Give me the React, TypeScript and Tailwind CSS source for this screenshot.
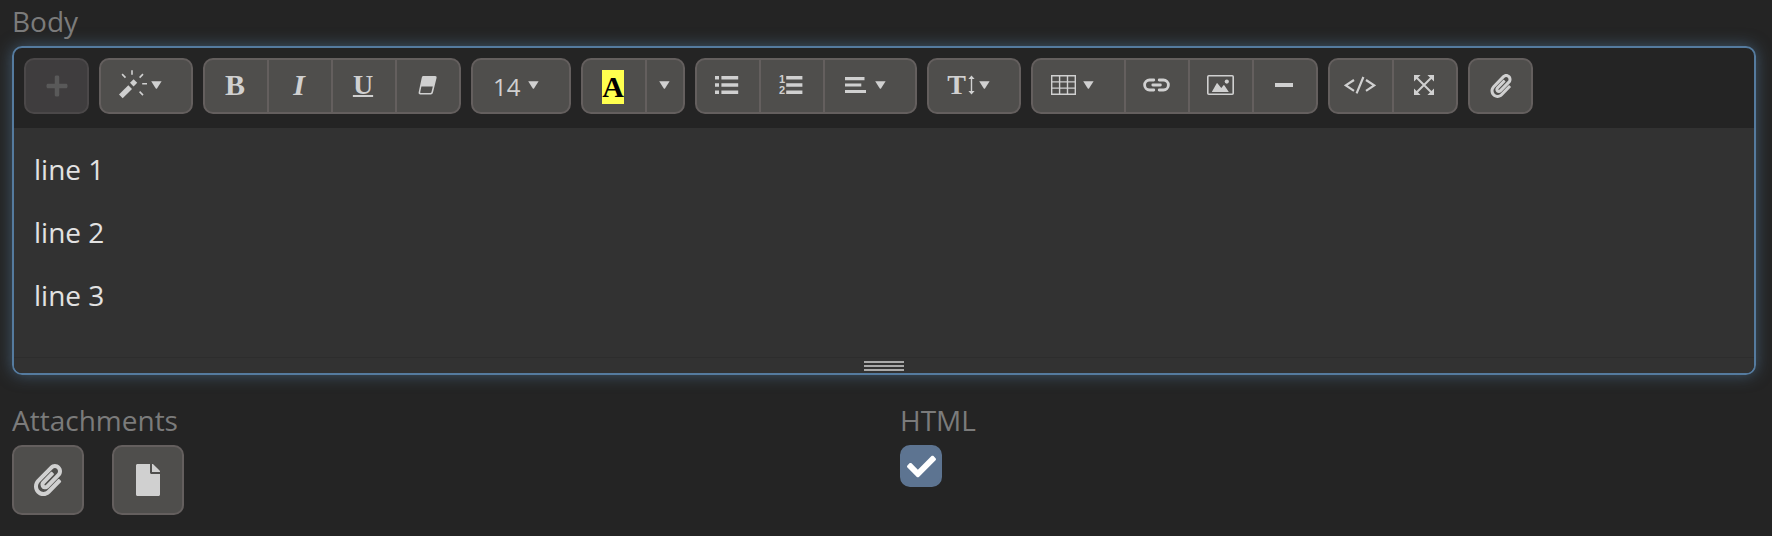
import { JSX, ReactNode } from 'react';
import cn from 'clsx';
import { FaCheck, FaFile, FaPaperclip, FaPlus } from 'react-icons/fa';

interface ToolButtonProps {
  label: string;
  children: ReactNode;
  className?: string;
  disabled?: boolean;
}

function ToolButton(props: Readonly<ToolButtonProps>): JSX.Element {
  const { label, children, className = 'w-[66px] justify-center pr-0.5 pb-0.5', disabled } = props;

  return (
    <button
      type="button"
      aria-label={label}
      disabled={disabled}
      className={cn(
        '-ml-0.5 flex h-14 shrink-0 items-center border-2 first:ml-0 first:rounded-l-[10px] last:rounded-r-[10px]',
        disabled ? 'border-[#4b4849] bg-[#3f3d3e] text-[#595959]' : 'border-[#645f5e] bg-[#4f4e4c] text-[#d0d0d0]',
        className,
      )}
    >
      {children}
    </button>
  );
}

function ToolGroup({ children }: Readonly<{ children: ReactNode }>): JSX.Element {
  return <div className="flex">{children}</div>;
}

function Caret(): JSX.Element {
  return (
    <svg width="11" height="8" viewBox="0 0 11 8" fill="currentColor" aria-hidden="true">
      <path d="M.2.2h10.4L6 7.5q-.6.7-1.2 0z" />
    </svg>
  );
}

function WandIcon(): JSX.Element {
  return (
    <svg width="28" height="30" viewBox="0 0 28 30" fill="currentColor" aria-hidden="true">
      <path d="M0 24.4 9.3 15.2 13 18.9 3.7 28.2z" />
      <path d="M11 12.8 14.6 9.2 18.2 12.8 14.6 16.4z" />
      <path d="M13 .3v4.5M3.1 4.1l3.4 3.5M24 4.1l-3.4 3.5M23.2 13.7H28M20.6 21.6l3.4 3.5" stroke="currentColor" strokeWidth="1.6" fill="none" />
    </svg>
  );
}

function EraserIcon(): JSX.Element {
  return (
    <svg width="19" height="20" viewBox="0 0 19 20" fill="currentColor" aria-hidden="true">
      <path
        fillRule="evenodd"
        d="M5.5 1H17.2Q19 1 18.6 2.8L15 17.4Q14.6 19.4 12.8 19.4H2Q.2 19.4.6 17.6L3.8 2.4Q4.1 1 5.5 1zM3.4 11.5 2.2 17.2Q2 18 2.8 18H12.2Q13.2 18 13.4 17.2L14.8 11.5z"
      />
    </svg>
  );
}

function BulletListIcon(): JSX.Element {
  return (
    <svg width="24" height="20" viewBox="0 0 24 20" fill="currentColor" aria-hidden="true">
      <path d="M0 1h4v3.6H0zM0 8.2h4v3.6H0zM0 15.4h4V19H0zM6.4 1h16.8v3.6H6.4zM6.4 8.2h16.8v3.6H6.4zM6.4 15.4h16.8V19H6.4z" />
    </svg>
  );
}

function NumberedListIcon(): JSX.Element {
  return (
    <svg width="24" height="24" viewBox="0 -2 24 24" fill="currentColor" className="overflow-visible" aria-hidden="true">
      <path d="M7.2 1h16.2v3.6H7.2zM7.2 8.2h16.2v3.6H7.2zM7.2 15.4h16.2V19H7.2z" />
      <text x="0" y="8.4" fontSize="11" fontWeight="700" fontFamily="Liberation Sans, sans-serif">1</text>
      <text x="0" y="19.2" fontSize="11" fontWeight="700" fontFamily="Liberation Sans, sans-serif">2</text>
    </svg>
  );
}

function AlignIcon(): JSX.Element {
  return (
    <svg width="28" height="30" viewBox="0 0 28 30" fill="currentColor" aria-hidden="true">
      <path d="M2 7h19.5v3.2H2zM2 13.5h16.3v3H2zM2 19.9h21v3.2H2z" />
    </svg>
  );
}

function HeightArrowIcon(): JSX.Element {
  return (
    <svg width="7" height="20" viewBox="0 0 7 20" fill="currentColor" aria-hidden="true">
      <path d="M3.5.6 6.6 4H4.2v12h2.4L3.5 19.4.4 16h2.4V4H.4z" />
    </svg>
  );
}

function TableIcon(): JSX.Element {
  return (
    <svg width="28" height="20" viewBox="0 0 28 20" fill="none" stroke="currentColor" strokeWidth="1.4" aria-hidden="true">
      <path d="M.7.7h23.6v18.6H.7zM8.6.7v18.6M16.5.7v18.6M.7 6.9h23.6M.7 13.1h23.6" />
    </svg>
  );
}

function LinkIcon(): JSX.Element {
  return (
    <svg width="27" height="14" viewBox="0 0 27 14" fill="none" stroke="currentColor" strokeWidth="2.8" strokeLinecap="round" aria-hidden="true">
      <path d="M10.8 2H6.6a5 5 0 0 0 0 10h4.2M16.2 2h4.2a5 5 0 0 1 0 10h-4.2M9.8 7h7.6" />
    </svg>
  );
}

function PictureIcon(): JSX.Element {
  return (
    <svg width="27" height="20" viewBox="0 0 27 20" fill="currentColor" aria-hidden="true">
      <rect x=".8" y=".8" width="25.4" height="18.4" rx="1" fill="none" stroke="currentColor" strokeWidth="1.6" />
      <circle cx="19.8" cy="6.6" r="2.1" />
      <path d="M4.8 17 9.6 8.4Q10 7.8 10.6 8.4L14.3 13l2-2.6q.6-.7 1.2 0L21.8 17z" />
    </svg>
  );
}

function CodeIcon(): JSX.Element {
  return (
    <svg width="32" height="18" viewBox="0 0 32 18" fill="none" stroke="currentColor" strokeWidth="2.2" aria-hidden="true">
      <path d="M10 4 1.8 9.4 10 14.8M22 4l8.2 5.4L22 14.8M19.4 1 12.6 17.4" />
    </svg>
  );
}

function FullscreenIcon(): JSX.Element {
  return (
    <svg width="20" height="20" viewBox="0 0 20 20" fill="currentColor" aria-hidden="true">
      <path d="M0 0h6.6L0 6.6zM20 0v6.6L13.4 0zM0 20v-6.6L6.6 20zM20 20h-6.6l6.6-6.6z" />
      <path d="M2 2 18 18M18 2 2 18" stroke="currentColor" strokeWidth="2" />
    </svg>
  );
}

const dropdown = 'w-[94px] gap-1 pb-0.5 pl-[18px]';
const single = 'w-[65px] justify-center';
const letter = "font-['Liberation_Serif',serif] font-bold";

function Toolbar(): JSX.Element {
  return (
    <div role="toolbar" aria-label="Formatting" className="flex flex-wrap gap-2.5 px-2.5 pt-2.5 pb-3.5">
      <ToolGroup>
        <ToolButton label="Insert" className={single} disabled>
          <FaPlus size={24} />
        </ToolButton>
      </ToolGroup>
      <ToolGroup>
        <ToolButton label="Style" className={dropdown}>
          <WandIcon />
          <Caret />
        </ToolButton>
      </ToolGroup>
      <ToolGroup>
        <ToolButton label="Bold">
          <span className={cn(letter, 'text-[30px] leading-[34px]')}>B</span>
        </ToolButton>
        <ToolButton label="Italic">
          <span className={cn(letter, 'text-[30px] leading-[34px] italic')}>I</span>
        </ToolButton>
        <ToolButton label="Underline">
          <span className={cn(letter, 'text-[28px] leading-[34px] underline decoration-2 underline-offset-1')}>U</span>
        </ToolButton>
        <ToolButton label="Remove formatting">
          <EraserIcon />
        </ToolButton>
      </ToolGroup>
      <ToolGroup>
        <ToolButton label="Font size" className="w-[100px] gap-2 pb-0.5 pl-5">
          <span className="pt-1 text-2xl">14</span>
          <Caret />
        </ToolButton>
      </ToolGroup>
      <ToolGroup>
        <ToolButton label="Recent colour">
          <span className={cn(letter, 'mt-1 bg-[#ffff4f] text-[30px] leading-[34px] text-black')}>A</span>
        </ToolButton>
        <ToolButton label="More colours" className="w-10 justify-center pr-0.5 pb-0.5">
          <Caret />
        </ToolButton>
      </ToolGroup>
      <ToolGroup>
        <ToolButton label="Unordered list">
          <BulletListIcon />
        </ToolButton>
        <ToolButton label="Ordered list">
          <NumberedListIcon />
        </ToolButton>
        <ToolButton label="Paragraph" className={dropdown}>
          <AlignIcon />
          <Caret />
        </ToolButton>
      </ToolGroup>
      <ToolGroup>
        <ToolButton label="Line height" className={dropdown}>
          <span className="flex w-7 items-center justify-end gap-0.5">
            <span className={cn(letter, 'text-[28px] leading-[34px]')}>T</span>
            <HeightArrowIcon />
          </span>
          <Caret />
        </ToolButton>
      </ToolGroup>
      <ToolGroup>
        <ToolButton label="Table" className="w-[95px] gap-1 pb-0.5 pl-[18px]">
          <TableIcon />
          <Caret />
        </ToolButton>
        <ToolButton label="Link">
          <LinkIcon />
        </ToolButton>
        <ToolButton label="Picture">
          <PictureIcon />
        </ToolButton>
        <ToolButton label="Horizontal rule">
          <span className="h-1 w-[18px] bg-current" />
        </ToolButton>
      </ToolGroup>
      <ToolGroup>
        <ToolButton label="Code view">
          <CodeIcon />
        </ToolButton>
        <ToolButton label="Full screen">
          <FullscreenIcon />
        </ToolButton>
      </ToolGroup>
      <ToolGroup>
        <ToolButton label="Attach file" className={single}>
          <FaPaperclip size={24} />
        </ToolButton>
      </ToolGroup>
    </div>
  );
}

const lines = ['line 1', 'line 2', 'line 3'];

function Editor(): JSX.Element {
  return (
    <div className="overflow-hidden rounded-[10px] border-2 border-[#557b9f] shadow-[0_0_16px_rgba(85,123,159,0.6)]">
      <Toolbar />
      <div
        role="textbox"
        aria-multiline="true"
        aria-labelledby="body-label"
        contentEditable
        suppressContentEditableWarning
        className="bg-[#323232] p-5 text-[#e2e2e2] outline-none"
      >
        {lines.map((line) => (
          <p key={line} className="mb-[21px]">
            {line}
          </p>
        ))}
      </div>
      <div className="flex h-4 cursor-ns-resize flex-col items-center gap-0.5 border-t border-[#2d2d2d] bg-[#323232] pt-[3px]">
        <span className="h-0.5 w-10 bg-[#a9a9a9]" />
        <span className="h-0.5 w-10 bg-[#a9a9a9]" />
        <span className="h-0.5 w-10 bg-[#a9a9a9]" />
      </div>
    </div>
  );
}

function AttachButton({ label, children }: Readonly<{ label: string; children: ReactNode }>): JSX.Element {
  return (
    <button type="button" aria-label={label} className="flex h-[70px] w-[72px] items-center justify-center rounded-[10px] border-2 border-[#645f5e] bg-[#4f4e4c] text-[#d0d0d0]">
      {children}
    </button>
  );
}

function App(): JSX.Element {
  return (
    <main className="min-h-screen bg-[#242424] pr-4 pl-3 font-['Open_Sans',sans-serif] text-[28px] leading-[42px] text-[#7b7b7b]">
      <div id="body-label" className="mb-1">
        Body
      </div>
      <Editor />
      <div className="mt-6 grid grid-cols-2 gap-8">
        <div role="group" aria-labelledby="attachments-label">
          <div id="attachments-label" className="mb-1">
            Attachments
          </div>
          <div className="flex gap-7">
            <AttachButton label="Upload attachment">
              <FaPaperclip size={32} />
            </AttachButton>
            <AttachButton label="Choose document">
              <FaFile size={32} />
            </AttachButton>
          </div>
        </div>
        <div>
          <label htmlFor="is-html" className="mb-1 block">
            HTML
          </label>
          <div className="grid size-[42px] place-items-center">
            <input id="is-html" type="checkbox" defaultChecked className="peer col-start-1 row-start-1 size-[42px] appearance-none rounded-[10px] border-2 border-[#5d7491] checked:bg-[#5d7491]" />
            <FaCheck size={29} className="pointer-events-none invisible col-start-1 row-start-1 text-white peer-checked:visible" />
          </div>
        </div>
      </div>
    </main>
  );
}

export default App;
